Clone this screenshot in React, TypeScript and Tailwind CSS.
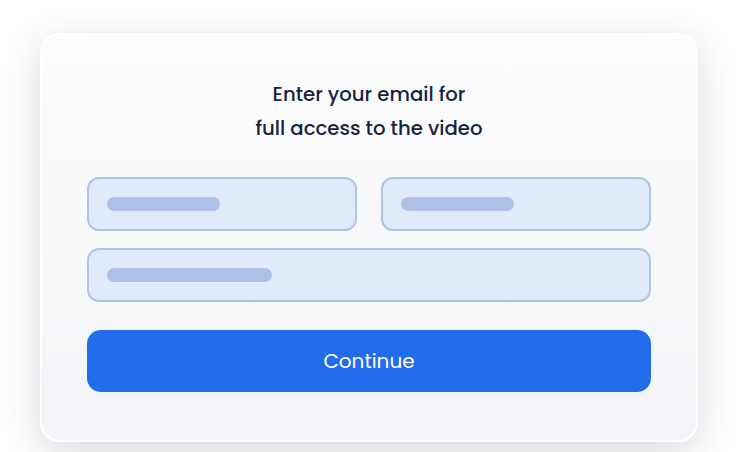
export default function App() {
  return (
    <div className="w-[740px] h-[452px] overflow-hidden bg-white" style={{ fontFamily: '"Poppins", "Open Sans", "Liberation Sans", sans-serif' }}>
      <div className="pt-[33px] pl-[40px]">
        <div className="w-[658px] h-[409px] rounded-[20px] border-2 border-white bg-gradient-to-b from-[#fdfdfe] to-[#f3f4f7] shadow-[0_10px_40px_rgba(20,30,50,0.17)] px-[45px] pt-[42px]">
          <div className="text-center text-[19.7px] leading-[34px] text-[#18233f] font-medium">
            <div>Enter your email for</div>
            <div>full access to the video</div>
          </div>
          <div className="mt-[32px] flex flex-col gap-[17px]">
            <div className="flex gap-[24px]">
              <div className="flex-1 h-[54px] rounded-[12px] border-2 border-[#adc3e8] bg-[#e1eafa] flex items-center pl-[18px]">
                <div className="w-[113px] h-[14px] rounded-full bg-[#adc1e6]" />
              </div>
              <div className="flex-1 h-[54px] rounded-[12px] border-2 border-[#adc3e8] bg-[#e1eafa] flex items-center pl-[18px]">
                <div className="w-[113px] h-[14px] rounded-full bg-[#adc1e6]" />
              </div>
            </div>
            <div className="h-[54px] rounded-[12px] border-2 border-[#adc3e8] bg-[#e1eafa] flex items-center pl-[18px]">
              <div className="w-[165px] h-[14px] rounded-full bg-[#adc1e6]" />
            </div>
          </div>
          <button className="mt-[28px] w-full h-[62px] rounded-[14px] bg-[#216cea] text-white text-[20px] font-normal flex items-center justify-center">
            Continue
          </button>
        </div>
      </div>
    </div>
  );
}
